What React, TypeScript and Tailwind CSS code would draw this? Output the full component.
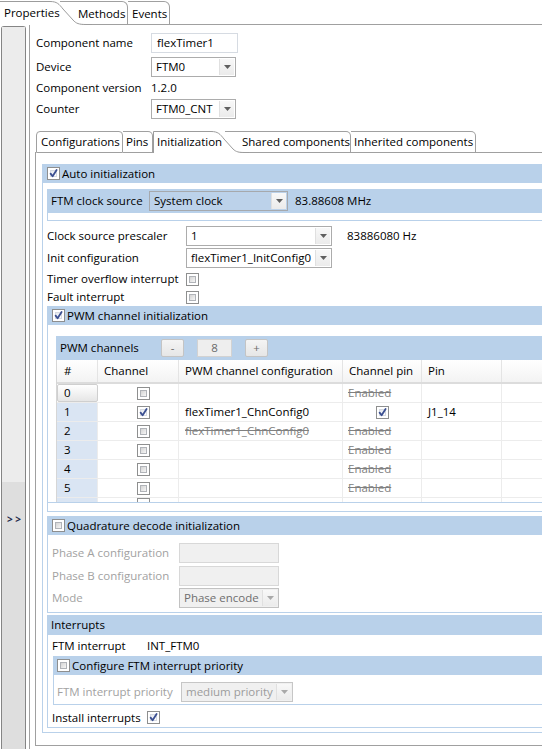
import React from 'react';

type Variant = 'normal' | 'blue' | 'disabled' | 'faded';

function Check({ checked = false }: { checked?: boolean }) {
  return (
    <div className="relative h-[13px] w-[13px] shrink-0 border border-[#8e8f8f] bg-white">
      <div
        className={
          checked
            ? 'absolute inset-[2px] border border-[#d5dae2] bg-gradient-to-br from-[#e4e8ee] to-white'
            : 'absolute inset-[2px] border border-[#b0b3b8] bg-gradient-to-br from-[#d4d4d4] to-[#f6f6f6]'
        }
      />
      {checked && (
        <svg className="absolute left-0 top-0" width="11" height="11" viewBox="0 0 11 11">
          <path d="M2.6 5.6 L4.6 8.2 L8.6 2" fill="none" stroke="#3b4f91" strokeWidth="1.8" strokeLinecap="round" strokeLinejoin="round" />
        </svg>
      )}
    </div>
  );
}

function Arrow({ disabled = false }: { disabled?: boolean }) {
  return (
    <div className="m-[1px] flex w-[15px] shrink-0 items-center justify-center border-l border-[#e0e0e0] bg-gradient-to-b from-[#f8f8f8] to-[#ebebeb]">
      <svg width="7" height="4" viewBox="0 0 7 4">
        <path d="M0 0 H7 L3.5 4 Z" fill={disabled ? '#a9a9a9' : '#5f5f5f'} />
      </svg>
    </div>
  );
}

function Combo({ value, className = '', variant = 'normal' }: { value: string; className?: string; variant?: Variant }) {
  const box =
    variant === 'blue'
      ? 'border-[#a6a9ad] bg-[#bcd2ea] text-black'
      : variant === 'disabled'
        ? 'border-[#c2c2c2] bg-[#f0f0f0] text-[#6e6e6e]'
        : variant === 'faded'
          ? 'border-[#c6c6c6] bg-[#f0f0f0] text-[#9c9c9c]'
          : 'border-[#acacac] bg-white text-black';
  return (
    <div className={`flex h-[20px] shrink-0 border ${box} ${className}`}>
      <div className="flex flex-1 items-center overflow-hidden whitespace-nowrap pl-[4px]">{value}</div>
      <Arrow disabled={variant === 'faded' || variant === 'disabled'} />
    </div>
  );
}

function GroupHeader({ label, checked, hasCheck = true, className = '' }: { label: string; checked?: boolean; hasCheck?: boolean; className?: string }) {
  return (
    <div className={`flex h-[19px] items-center gap-[2px] bg-[#b9d1ea] ${className}`}>
      {hasCheck && <Check checked={checked} />}
      <span className="whitespace-nowrap">{label}</span>
    </div>
  );
}

function Strike({ children }: { children: React.ReactNode }) {
  return <span className="text-[#808080] line-through">{children}</span>;
}

type Row = { n: string; ch: boolean; cfg: string; cfgStrike: boolean; pinCheck: boolean; pin: string };

const rows: Row[] = [
  { n: '0', ch: false, cfg: '', cfgStrike: false, pinCheck: false, pin: '' },
  { n: '1', ch: true, cfg: 'flexTimer1_ChnConfig0', cfgStrike: false, pinCheck: true, pin: 'J1_14' },
  { n: '2', ch: false, cfg: 'flexTimer1_ChnConfig0', cfgStrike: true, pinCheck: false, pin: '' },
  { n: '3', ch: false, cfg: '', cfgStrike: false, pinCheck: false, pin: '' },
  { n: '4', ch: false, cfg: '', cfgStrike: false, pinCheck: false, pin: '' },
  { n: '5', ch: false, cfg: '', cfgStrike: false, pinCheck: false, pin: '' },
];

function PwmTable() {
  const head = 'flex h-full items-center border-r border-[#e4e4e4] pl-[6px] whitespace-nowrap';
  const cell = 'flex h-full items-center border-r border-[#ececec] whitespace-nowrap';
  return (
    <div className="border-l border-[#d6d6d6]">
      <div className="flex h-[24px] border-b-2 border-[#dcdcdc] bg-gradient-to-b from-white to-[#f3f3f3]">
        <div className={`${head} w-[41px] pl-[7px]`}>#</div>
        <div className={`${head} w-[81px]`}>Channel</div>
        <div className={`${head} w-[164px]`}>PWM channel configuration</div>
        <div className={`${head} w-[79px] pl-[5px]`}>Channel pin</div>
        <div className={`${head} w-[80px]`}>Pin</div>
        <div className="flex-1" />
      </div>
      {rows.map((r, i) => (
        <div key={r.n} className="flex h-[19px] border-b border-[#ececec]">
          <div
            className={
              i === 0
                ? 'flex h-full w-[41px] items-center rounded-[2px] border border-[#cfcfcf] bg-gradient-to-b from-white to-[#e6e6e6] pl-[6px]'
                : 'flex h-full w-[41px] items-center border-r border-[#ececec] bg-[#dae5f3] pl-[7px]'
            }
          >
            {r.n}
          </div>
          <div className={`${cell} w-[81px] pl-[39px]`}>
            <Check checked={r.ch} />
          </div>
          <div className={`${cell} w-[164px] pl-[6px]`}>
            {r.cfgStrike ? <Strike>{r.cfg}</Strike> : r.cfg}
          </div>
          <div className={`${cell} w-[79px] ${r.pinCheck ? 'pl-[33px]' : 'pl-[5px]'}`}>
            {r.pinCheck ? <Check checked /> : <Strike>Enabled</Strike>}
          </div>
          <div className={`${cell} w-[80px] pl-[6px]`}>{r.pin}</div>
          <div className="flex-1" />
        </div>
      ))}
      <div className="flex h-[4px] overflow-hidden">
        <div className="h-full w-[41px] border-r border-[#ececec] bg-[#dae5f3]" />
        <div className="h-full w-[81px] border-r border-[#ececec] pl-[39px]">
          <div className="h-[13px] w-[13px] border border-[#8e8f8f]" />
        </div>
        <div className="h-full w-[164px] border-r border-[#ececec]" />
        <div className="h-full w-[79px] border-r border-[#ececec]" />
        <div className="h-full w-[80px] border-r border-[#ececec]" />
      </div>
    </div>
  );
}

function TopTabs() {
  return (
    <div className="flex h-[25px] whitespace-nowrap">
      <div className="relative z-10 w-[60px]">
        <svg className="absolute left-0 top-0" width="92" height="25" viewBox="0 0 92 25">
          <path d="M0 25 L0 1.5 L50 1.5 C57 1.5 59 4 63 9 L73 20 C76 23.5 79 24.5 86 24.5 L92 24.5 L92 25 Z" fill="#ffffff" />
          <path d="M0 1.5 L50 1.5 C57 1.5 59 4 63 9 L73 20 C76 23.5 79 24.5 86 24.5 L92 24.5" fill="none" stroke="#9c9c9c" strokeWidth="1" />
        </svg>
        <div className="relative flex h-[24px] items-center pl-[4px] pt-[2px]">Properties</div>
      </div>
      <div className="mt-[1px] flex h-[24px] w-[68px] items-center rounded-tr-[6px] border-b border-r border-t border-[#a0a0a0] pl-[18px] pt-[1px]">
        Methods
      </div>
      <div className="mt-[1px] flex h-[24px] w-[42px] items-center rounded-tr-[6px] border-b border-r border-t border-[#a0a0a0] pl-[4px] pt-[1px]">
        Events
      </div>
      <div className="h-[25px] flex-1 border-b border-[#a0a0a0]" />
    </div>
  );
}

function InnerTabs() {
  return (
    <div className="flex h-[22px] whitespace-nowrap">
      <div className="h-[22px] w-[1px] border-b border-[#a0a0a0]" />
      <div className="flex h-[22px] w-[87px] items-center rounded-t-[4px] border border-[#a0a0a0] pl-[4px]">Configurations</div>
      <div className="flex h-[22px] w-[30px] items-center rounded-tr-[5px] border-b border-r border-t border-[#a0a0a0] pl-[3px]">Pins</div>
      <div className="relative z-10 w-[72px]">
        <svg className="absolute left-0 top-0" width="96" height="22" viewBox="0 0 96 22">
          <path d="M0.5 22 L0.5 0.5 L58 0.5 C65 0.5 67 3 71 8 L80 18 C83 21 86 21.5 92 21.5 L96 21.5 L96 22 Z" fill="#ffffff" />
          <path d="M0.5 22 L0.5 0.5 L58 0.5 C65 0.5 67 3 71 8 L80 18 C83 21 86 21.5 92 21.5 L96 21.5" fill="none" stroke="#9c9c9c" strokeWidth="1" />
        </svg>
        <div className="relative flex h-[21px] items-center pl-[4px]">Initialization</div>
      </div>
      <div className="flex h-[22px] w-[126px] shrink-0 items-center overflow-hidden rounded-tr-[5px] border-b border-r border-t border-[#a0a0a0] pl-[17px]">Shared components</div>
      <div className="flex h-[22px] w-[125px] shrink-0 items-center overflow-hidden rounded-tr-[5px] border-b border-r border-t border-[#a0a0a0] pl-[3px]">Inherited components</div>
      <div className="h-[22px] flex-1 border-b border-[#a0a0a0]" />
    </div>
  );
}

function Sidebar() {
  return (
    <div className="flex w-[29px] shrink-0 pt-[1px]">
      <div className="ml-[1px] flex w-[25px] flex-col rounded-t-[3px] border-l border-r border-t border-[#858585]">
        <div className="h-[455px] bg-[#ececec]" />
        <div className="flex-1 bg-[#dedede] pl-[5px] pt-[32px] text-[10px] font-bold text-[#1d2a4a]">&gt; &gt;</div>
      </div>
    </div>
  );
}

export default function App() {
  return (
    <div className="h-[749px] w-[542px] overflow-hidden bg-white font-['Open_Sans','Noto_Sans',sans-serif] text-[11.5px] leading-none text-black">
      <TopTabs />
      <div className="flex h-[724px]">
        <Sidebar />
        <div className="flex-1 border-l border-[#a0a0a0] pl-[5px] pt-[8px]">
          <div className="pl-[1px]">
            <div className="flex h-[20px] items-center">
              <div className="w-[115px]">Component name</div>
              <div className="flex h-[20px] w-[87px] items-center border border-[#d6dbe2] pl-[5px]">flexTimer1</div>
            </div>
            <div className="mt-[4px] flex h-[20px] items-center">
              <div className="w-[115px]">Device</div>
              <Combo value="FTM0" className="w-[85px]" />
            </div>
            <div className="flex h-[22px] items-center">
              <div className="w-[115px]">Component version</div>
              <div>1.2.0</div>
            </div>
            <div className="flex h-[20px] items-center">
              <div className="w-[115px]">Counter</div>
              <Combo value="FTM0_CNT" className="w-[85px]" />
            </div>
          </div>

          <div className="mt-[12px]">
            <InnerTabs />
            <div className="border-b border-l border-[#a0a0a0] pb-[12px] pl-[6px] pt-[11px]">
              <GroupHeader label="Auto initialization" checked className="pl-[5px]" />
              <div className="border-b border-l border-[#b9d1ea] pb-[4px] pl-[4px] pt-[6px]">
                <div className="flex h-[24px] items-center bg-[#b9d1ea] pl-[4px]">
                  <div className="w-[98px] whitespace-nowrap">FTM clock source</div>
                  <Combo value="System clock" variant="blue" className="w-[139px]" />
                  <div className="ml-[7px]">83.88608 MHz</div>
                </div>
                <div className="h-[8px] border-b border-l border-[#b9d1ea]" />

                <div className="mt-[5px] flex h-[20px] items-center">
                  <div className="w-[139px]">Clock source prescaler</div>
                  <Combo value="1" className="w-[146px]" />
                  <div className="ml-[15px]">83886080 Hz</div>
                </div>
                <div className="mt-[2px] flex h-[20px] items-center">
                  <div className="w-[139px]">Init configuration</div>
                  <Combo value="flexTimer1_InitConfig0" className="w-[146px]" />
                </div>
                <div className="mt-[2px] flex h-[18px] items-center">
                  <div className="w-[139px]">Timer overflow interrupt</div>
                  <Check />
                </div>
                <div className="flex h-[18px] items-center">
                  <div className="w-[139px]">Fault interrupt</div>
                  <Check />
                </div>

                <GroupHeader label="PWM channel initialization" checked className="pl-[5px]" />
                <div className="border-b border-l border-[#b9d1ea] pb-[8px]">
                  <div className="border-b border-[#b9d1ea] pl-[8px] pt-[11px]">
                    <div className="flex h-[24px] items-center bg-[#b9d1ea] pl-[4px]">
                      <div className="w-[101px]">PWM channels</div>
                      <div className="flex h-[18px] w-[23px] items-center justify-center rounded-[2px] border border-[#c4c4c4] bg-gradient-to-b from-[#f4f4f4] to-[#e6e6e6] text-[#6a6a6a]">-</div>
                      <div className="ml-[13px] flex h-[18px] w-[35px] items-center justify-center border border-[#d2d2d2] bg-[#eeeeee] text-[#6a6a6a]">8</div>
                      <div className="ml-[13px] flex h-[18px] w-[23px] items-center justify-center rounded-[2px] border border-[#c4c4c4] bg-gradient-to-b from-[#f4f4f4] to-[#e6e6e6] text-[#6a6a6a]">+</div>
                    </div>
                    <PwmTable />
                  </div>
                </div>

                <GroupHeader label="Quadrature decode initialization" className="mt-[4px] pl-[5px]" />
                <div className="border-b border-l border-[#b9d1ea] pb-[4px] pl-[4px] pt-[8px] text-[#a2a2a2]">
                  <div className="flex h-[20px] items-center">
                    <div className="w-[127px]">Phase A configuration</div>
                    <div className="h-[20px] w-[100px] border border-[#d8d8d8] bg-[#f0f0f0]" />
                  </div>
                  <div className="mt-[3px] flex h-[20px] items-center">
                    <div className="w-[127px]">Phase B configuration</div>
                    <div className="h-[20px] w-[100px] border border-[#d8d8d8] bg-[#f0f0f0]" />
                  </div>
                  <div className="mt-[2px] flex h-[20px] items-center">
                    <div className="w-[127px]">Mode</div>
                    <Combo value="Phase encode" variant="disabled" className="w-[100px]" />
                  </div>
                </div>

                <GroupHeader label="Interrupts" hasCheck={false} className="mt-[2px] h-[20px] pl-[4px]" />
                <div className="border-b border-l border-[#b9d1ea] pl-[4px]">
                  <div className="flex h-[21px] items-center">
                    <div className="w-[95px]">FTM interrupt</div>
                    <div>INT_FTM0</div>
                  </div>
                  <div className="ml-[1px]">
                    <GroupHeader label="Configure FTM interrupt priority" className="pl-[4px]" />
                    <div className="border-b border-l border-[#b9d1ea] pb-[2px] pl-[3px] pt-[7px]">
                      <div className="flex h-[20px] items-center">
                        <div className="w-[124px] text-[#a2a2a2]">FTM interrupt priority</div>
                        <Combo value="medium priority" variant="faded" className="w-[112px]" />
                      </div>
                    </div>
                  </div>
                  <div className="mt-[3px] flex h-[19px] items-center">
                    <div className="w-[95px]">Install interrupts</div>
                    <Check checked />
                  </div>
                </div>
              </div>
            </div>
          </div>
        </div>
      </div>
    </div>
  );
}
